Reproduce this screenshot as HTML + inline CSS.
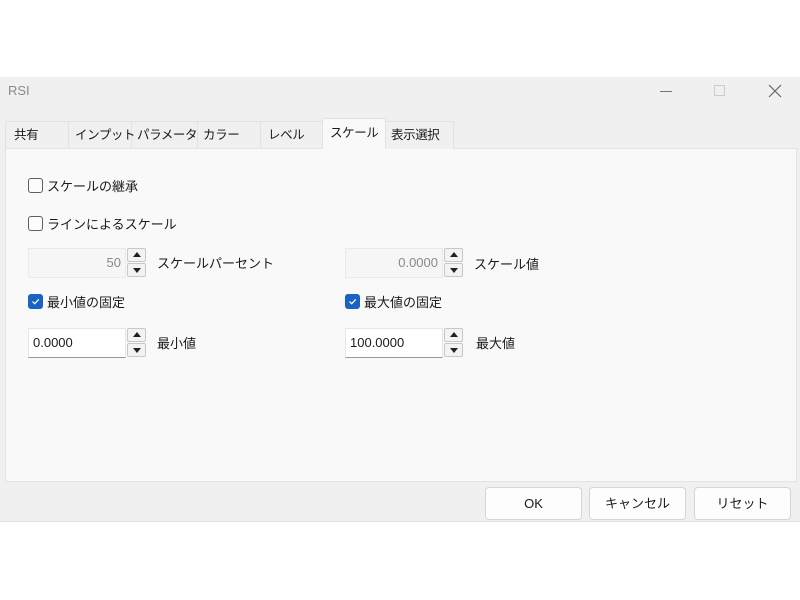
<html><head><style>
*{box-sizing:border-box;margin:0;padding:0}
body{width:800px;height:600px;background:#fff;position:relative;font-family:"Liberation Sans","Noto Sans CJK JP",sans-serif;font-size:13px;color:#1a1a1a;overflow:hidden}
.a{position:absolute}
.win{left:0;top:77px;width:800px;height:445px;background:#f0f0f0;border-bottom:1px solid #e2e2e2}
.tab{position:absolute;top:121px;height:28px;border:1px solid #e2e2e2;border-bottom:none;background:#f0f0f0}
.tt{position:absolute;top:127px;font-size:12.5px;line-height:16px;white-space:nowrap;letter-spacing:-0.4px;z-index:5}
.panel{left:5px;top:148px;width:792px;height:334px;background:#f9f9f9;border:1px solid #e3e3e3}
.cb{position:absolute;width:15px;height:15px;border:1px solid #5f5f5f;border-radius:3px;background:#fcfcfc}
.cbc{background:#1a63c2;border-color:#1a63c2}
.lbl{position:absolute;font-size:13px;line-height:16px;white-space:nowrap}
.inp{position:absolute;height:30px;width:98px;background:#fff;border:1px solid #e6e6e6;border-bottom:1px solid #999;font-size:13px;line-height:28px;padding:0 4px}
.dis{background:#f6f6f6;border:1px solid #eaeaea;color:#888;text-align:right}
.sp{position:absolute;width:19px;height:14px;background:#f3f3f3;border:1px solid #c8c8c8;border-radius:2px}
.up::after{content:"";position:absolute;left:5px;top:3px;border-left:4px solid transparent;border-right:4px solid transparent;border-bottom:5px solid #222}
.dn::after{content:"";position:absolute;left:5px;top:4px;border-left:4px solid transparent;border-right:4px solid transparent;border-top:5px solid #222}
.btn{position:absolute;top:487px;height:33px;width:97px;background:#fdfdfd;border:1px solid #d5d5d5;border-radius:4px;text-align:center;line-height:31px;font-size:13px}
</style></head><body>
<div class="a win"></div>
<div class="a" style="left:8px;top:83px;color:#8a8a8a;font-size:13px">RSI</div>
<div class="a" style="left:660px;top:91px;width:12px;height:1px;background:#777"></div>
<div class="a" style="left:714px;top:85px;width:11px;height:11px;border:1px solid #ccc"></div>
<svg class="a" style="left:768px;top:84px" width="14" height="14"><path d="M1 1L13 13M13 1L1 13" stroke="#666" stroke-width="1.2"/></svg>
<div class="tab" style="left:5px;width:64px"></div>
<div class="tab" style="left:68px;width:64px"></div>
<div class="tab" style="left:131px;width:67px"></div>
<div class="tab" style="left:197px;width:64px"></div>
<div class="tab" style="left:260px;width:63px"></div>
<div class="a panel"></div>
<div class="tab" style="left:322px;top:118px;height:31px;width:64px;background:#f9f9f9;z-index:2"></div>
<div class="tab" style="left:385px;width:69px"></div>
<div class="tt" style="left:14px">共有</div>
<div class="tt" style="left:75px">インプット</div>
<div class="tt" style="left:137px">パラメータ</div>
<div class="tt" style="left:203px">カラー</div>
<div class="tt" style="left:268px">レベル</div>
<div class="tt" style="left:330px;top:125px">スケール</div>
<div class="tt" style="left:391px">表示選択</div>

<div class="cb" style="left:28px;top:178px"></div><div class="lbl" style="left:47px;top:179px">スケールの継承</div>
<div class="cb" style="left:28px;top:216px"></div><div class="lbl" style="left:47px;top:217px">ラインによるスケール</div>

<div class="inp dis" style="left:28px;top:248px">50</div>
<div class="sp up" style="left:127px;top:248px"></div><div class="sp dn" style="left:127px;top:263px"></div>
<div class="lbl" style="left:157px;top:256px">スケールパーセント</div>
<div class="inp dis" style="left:345px;top:248px">0.0000</div>
<div class="sp up" style="left:444px;top:248px"></div><div class="sp dn" style="left:444px;top:263px"></div>
<div class="lbl" style="left:474px;top:257px">スケール値</div>

<div class="cb cbc" style="left:28px;top:294px"><svg width="13" height="13" style="position:absolute;left:0;top:0"><path d="M3.5 6.5L5.7 8.7L9.8 4.3" stroke="#fff" stroke-width="1.2" fill="none"/></svg></div><div class="lbl" style="left:47px;top:295px">最小値の固定</div>
<div class="cb cbc" style="left:345px;top:294px"><svg width="13" height="13" style="position:absolute;left:0;top:0"><path d="M3.5 6.5L5.7 8.7L9.8 4.3" stroke="#fff" stroke-width="1.2" fill="none"/></svg></div><div class="lbl" style="left:364px;top:295px">最大値の固定</div>

<div class="inp" style="left:28px;top:328px">0.0000</div>
<div class="sp up" style="left:127px;top:328px"></div><div class="sp dn" style="left:127px;top:343px"></div>
<div class="lbl" style="left:157px;top:336px">最小値</div>
<div class="inp" style="left:345px;top:328px">100.0000</div>
<div class="sp up" style="left:444px;top:328px"></div><div class="sp dn" style="left:444px;top:343px"></div>
<div class="lbl" style="left:476px;top:336px">最大値</div>

<div class="btn" style="left:485px">OK</div>
<div class="btn" style="left:589px">キャンセル</div>
<div class="btn" style="left:694px">リセット</div>
</body></html>
